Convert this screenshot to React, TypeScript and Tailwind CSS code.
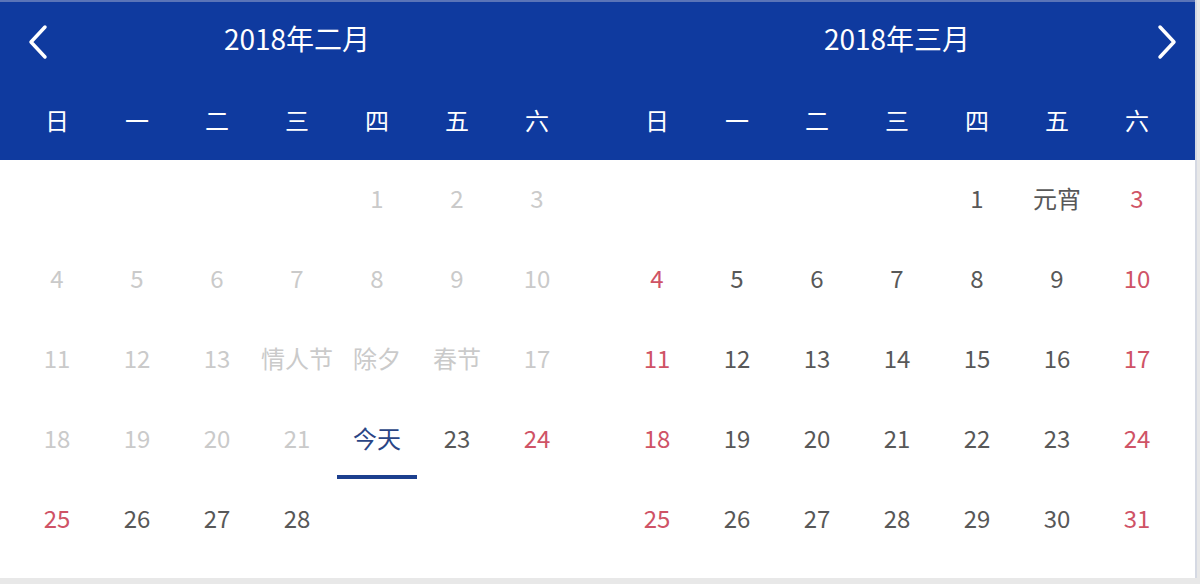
import React from "react";

type Cell = { label: string; tone?: "muted" | "red" | "today" | "normal" } | null;

const weekdays = ["日", "一", "二", "三", "四", "五", "六"];

const feb: Cell[] = [
  null, null, null, null,
  { label: "1", tone: "muted" }, { label: "2", tone: "muted" }, { label: "3", tone: "muted" },
  { label: "4", tone: "muted" }, { label: "5", tone: "muted" }, { label: "6", tone: "muted" }, { label: "7", tone: "muted" },
  { label: "8", tone: "muted" }, { label: "9", tone: "muted" }, { label: "10", tone: "muted" },
  { label: "11", tone: "muted" }, { label: "12", tone: "muted" }, { label: "13", tone: "muted" }, { label: "情人节", tone: "muted" },
  { label: "除夕", tone: "muted" }, { label: "春节", tone: "muted" }, { label: "17", tone: "muted" },
  { label: "18", tone: "muted" }, { label: "19", tone: "muted" }, { label: "20", tone: "muted" }, { label: "21", tone: "muted" },
  { label: "今天", tone: "today" }, { label: "23" }, { label: "24", tone: "red" },
  { label: "25", tone: "red" }, { label: "26" }, { label: "27" }, { label: "28" },
];

const march: Cell[] = [
  null, null, null, null,
  { label: "1" }, { label: "元宵" }, { label: "3", tone: "red" },
];
for (let d = 4; d <= 31; d++) {
  const col = (d + 3) % 7;
  march.push({ label: String(d), tone: col === 0 || col === 6 ? "red" : "normal" });
}

const toneClass: Record<string, string> = {
  muted: "text-[#cacaca]",
  red: "text-[#cf5366]",
  today: "text-[#2a4585]",
  normal: "text-[#585858]",
};

function MonthGrid({ cells }: { cells: Cell[] }) {
  return (
    <div className="grid grid-cols-7">
      {cells.map((c, i) => (
        <div key={i} className="relative flex h-[80px] items-center justify-center pb-[4px] text-[24px]">
          {c ? <span className={toneClass[c.tone ?? "normal"]}>{c.label}</span> : null}
          {c?.tone === "today" ? <div className="absolute bottom-[1px] left-0 h-[4px] w-full bg-[#1c3f8e]" /> : null}
        </div>
      ))}
    </div>
  );
}

function Chevron({ dir }: { dir: "left" | "right" }) {
  return (
    <svg width="22" height="36" viewBox="0 0 22 36" fill="none" stroke="white" strokeWidth="3.5" strokeLinecap="round" strokeLinejoin="round">
      {dir === "left" ? <path d="M18 3 L4 18 L18 33" /> : <path d="M4 3 L18 18 L4 33" />}
    </svg>
  );
}

export default function App() {
  return (
    <div
      className="h-[584px] w-[1200px] overflow-hidden bg-[#e8e8e8]"
      style={{ fontFamily: '"Noto Sans CJK SC", "Noto Sans", sans-serif' }}
    >
      <div className="h-[578px] w-[1197px] border-r-2 border-[#d5d9e3] bg-white">
        <div className="h-[160px] border-t-2 border-[#5a74b8] bg-[#0f3a9f] px-[17px] text-white">
          <div className="grid grid-cols-[560px_560px] gap-[40px]">
            <div>
              <div className="relative flex h-[80px] items-center justify-center pb-[8px] text-[28px]">
                <div className="absolute left-[10px] top-[22px]"><Chevron dir="left" /></div>
                2018年二月
              </div>
              <div className="grid grid-cols-7">
                {weekdays.map((w) => (
                  <div key={w} className="flex h-[80px] items-center justify-center pb-[4px] text-[24px]">{w}</div>
                ))}
              </div>
            </div>
            <div>
              <div className="relative flex h-[80px] items-center justify-center pb-[8px] text-[28px]">
                2018年三月
                <div className="absolute right-[-1px] top-[22px]"><Chevron dir="right" /></div>
              </div>
              <div className="grid grid-cols-7">
                {weekdays.map((w) => (
                  <div key={w} className="flex h-[80px] items-center justify-center pb-[4px] text-[24px]">{w}</div>
                ))}
              </div>
            </div>
          </div>
        </div>
        <div className="grid grid-cols-[560px_560px] gap-[40px] px-[17px]">
          <MonthGrid cells={feb} />
          <MonthGrid cells={march} />
        </div>
      </div>
    </div>
  );
}
